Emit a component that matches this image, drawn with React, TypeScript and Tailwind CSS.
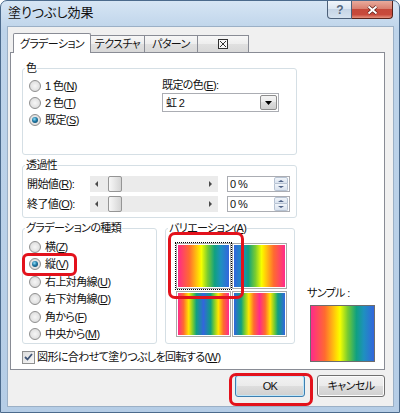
import React from "react";

const FONT =
  "font-['Liberation_Sans','Noto_Sans_CJK_JP',sans-serif] [font-feature-settings:'palt']";

const RAINBOW =
  "bg-[linear-gradient(90deg,#ff2a8a_0%,#ff6a30_22%,#ffe600_42%,#f5ff00_46%,#7acc30_58%,#10a080_72%,#1e90c0_84%,#3366dd_100%)]";
const RAINBOW_REV =
  "bg-[linear-gradient(270deg,#ff2a8a_0%,#ff6a30_22%,#ffe600_42%,#f5ff00_46%,#7acc30_58%,#10a080_72%,#1e90c0_84%,#3366dd_100%)]";
const RAINBOW_MID =
  "bg-[linear-gradient(90deg,#ff2a8a_0%,#ff6a30_11%,#ffe600_21%,#7acc30_29%,#10a080_36%,#3366dd_50%,#10a080_64%,#7acc30_71%,#ffe600_79%,#ff6a30_89%,#ff2a8a_100%)]";
const RAINBOW_MID_REV =
  "bg-[linear-gradient(90deg,#3366dd_0%,#10a080_14%,#7acc30_21%,#ffe600_29%,#ff6a30_39%,#ff2a8a_50%,#ff6a30_61%,#ffe600_71%,#7acc30_79%,#10a080_86%,#3366dd_100%)]";

function Acc({ t }: { t: string }) {
  return <span className="underline underline-offset-[1px]">{t}</span>;
}

function Radio({ checked = false }: { checked?: boolean }) {
  return (
    <span className="flex h-[12px] w-[12px] shrink-0 items-center justify-center rounded-full border border-[#8f8f8f] bg-[radial-gradient(circle_at_50%_50%,#f6f6f6_0%,#e4e4e4_55%,#cdcdcd_100%)]">
      {checked && (
        <span className="h-[6px] w-[6px] rounded-full bg-[radial-gradient(circle_at_40%_35%,#8fe0fa_0%,#1f78a4_45%,#0b3a57_100%)]" />
      )}
    </span>
  );
}

function RadioRow({
  checked,
  h,
  children,
}: {
  checked?: boolean;
  h: string;
  children: React.ReactNode;
}) {
  return (
    <div className={"flex items-center gap-[4px] " + h}>
      <Radio checked={checked} />
      <span className="leading-[14px]">{children}</span>
    </div>
  );
}

function Group({
  label,
  className,
  children,
}: {
  label: React.ReactNode;
  className: string;
  children?: React.ReactNode;
}) {
  return (
    <div className={"rounded-[3px] border border-[#d5dfe5] " + className}>
      <div className="-mt-[8px] ml-[2px] w-fit bg-white px-[1px] leading-[14px]">{label}</div>
      {children}
    </div>
  );
}

function Slider() {
  return (
    <div className="flex h-[16px] w-[128px] items-center bg-[#ebebeb]">
      <span className="ml-[5px] h-0 w-0 border-y-[3px] border-r-[3px] border-y-transparent border-r-[#4a4a4a]" />
      <span className="ml-[10px] h-[16px] w-[14px] rounded-[2px] border border-[#959595] bg-[linear-gradient(90deg,#f7f7f7,#e6e6e6_50%,#d4d4d4)]" />
      <span className="ml-auto mr-[6px] h-0 w-0 border-y-[3px] border-l-[3px] border-y-transparent border-l-[#4a4a4a]" />
    </div>
  );
}

function Spin() {
  return (
    <div className="ml-[9px] flex h-[16px] w-[63px] items-center border border-[#abadb3] bg-white pl-[2px]">
      <span className="flex-1 leading-[14px]">0 %</span>
      <div className="mr-[1px] flex h-[14px] w-[14px] flex-col">
        <span className="flex h-[7px] items-center justify-center rounded-t-[2px] border border-[#b7c3d3] bg-[linear-gradient(180deg,#f1f5fa,#d9e2ee)]">
          <span className="h-0 w-0 border-x-[3px] border-b-[2px] border-x-transparent border-b-[#4d6185]" />
        </span>
        <span className="flex h-[7px] items-center justify-center rounded-b-[2px] border border-t-0 border-[#b7c3d3] bg-[linear-gradient(180deg,#f1f5fa,#d9e2ee)]">
          <span className="h-0 w-0 border-x-[3px] border-t-[2px] border-x-transparent border-t-[#4d6185]" />
        </span>
      </div>
    </div>
  );
}

function Tile({ bg, focus }: { bg: string; focus?: boolean }) {
  return (
    <div
      className={
        "border border-[#a9a9a9] bg-white p-[1px] " +
        (focus ? "outline outline-1 outline-offset-0 outline-dotted outline-black" : "")
      }
    >
      <div className={"h-full w-full " + bg} />
    </div>
  );
}

function Button({ children, def }: { children: React.ReactNode; def?: boolean }) {
  return (
    <div
      className={
        "flex h-[22px] items-center justify-center rounded-[3px] border bg-[linear-gradient(180deg,#f2f2f2_0%,#ebebeb_48%,#dddddd_52%,#cfcfcf_100%)] leading-[14px] " +
        (def
          ? "w-[70px] border-[#3c7fb1] shadow-[inset_0_0_0_1px_#bfe6f9]"
          : "w-[68px] border-[#707070] shadow-[inset_0_0_0_1px_#fcfcfc]")
      }
    >
      {children}
    </div>
  );
}

export default function App() {
  return (
    <div
      className={
        "relative h-[413px] w-[400px] overflow-hidden rounded-t-[7px] border border-[#4b6a8c] bg-[linear-gradient(180deg,#d6e5f4_0%,#bed4ea_7%,#b5cde6_100%)] text-[11px] tracking-[-0.6px] text-[#111] " +
        FONT
      }
    >
      {/* title bar */}
      <div className="flex h-[26px] items-start justify-between pl-[7px] pr-[6px]">
        <span className="mt-[4px] text-[13px] leading-[16px] tracking-normal">塗りつぶし効果</span>
        <div className="flex">
          <div className="flex h-[18px] w-[25px] items-center justify-center rounded-bl-[4px] border border-t-0 border-[#4c6079] bg-[linear-gradient(180deg,#f1f5fa_0%,#dde7f2_45%,#c6d5e6_50%,#d5e2ef_100%)] text-[12px] font-bold leading-none text-[#55677e]">
            ?
          </div>
          <div className="flex h-[18px] w-[41px] items-center justify-center rounded-br-[4px] border border-l-0 border-t-0 border-[#5a2219] bg-[linear-gradient(180deg,#e9ab9c_0%,#d98070_45%,#c5493a_50%,#c84a3b_80%,#e5937f_100%)]">
            <svg width="11" height="10" viewBox="0 0 11 10">
              <path d="M1.5 1.5 9.5 8.5M9.5 1.5 1.5 8.5" stroke="#5a1d15" strokeWidth="3.4" />
              <path d="M1.5 1.5 9.5 8.5M9.5 1.5 1.5 8.5" stroke="#ffffff" strokeWidth="2" />
            </svg>
          </div>
        </div>
      </div>

      {/* client area */}
      <div className="ml-[7px] h-[379px] w-[385px] bg-[#f0f0f0] shadow-[0_0_0_1px_#9bb0c6]">
        {/* tabs */}
        <div className="flex h-[25px] items-end pl-[5px]">
          <div className="relative z-10 -mb-px flex h-[20px] w-[78px] items-center justify-center rounded-t-[2px] border border-b-0 border-[#898c95] bg-white leading-[14px]">
            グラデーション
          </div>
          <div className="flex h-[17px] w-[54px] items-center justify-center border-r border-t border-[#898c95] bg-[linear-gradient(180deg,#f7f7f7_0%,#ededed_50%,#e0e0e0_51%,#d8d8d8_100%)] leading-[14px]">
            テクスチャ
          </div>
          <div className="flex h-[17px] w-[53px] items-center justify-center border-r border-t border-[#898c95] bg-[linear-gradient(180deg,#f7f7f7_0%,#ededed_50%,#e0e0e0_51%,#d8d8d8_100%)] leading-[14px]">
            パターン
          </div>
          <div className="flex h-[17px] w-[51px] items-center justify-center border-r border-t border-[#898c95] bg-[linear-gradient(180deg,#f7f7f7_0%,#ededed_50%,#e0e0e0_51%,#d8d8d8_100%)]">
            <svg width="10" height="10" viewBox="0 0 10 10">
              <rect x="0.5" y="0.5" width="9" height="9" fill="#f4f4f4" stroke="#303030" />
              <path d="M2 2 8 8M8 2 2 8" stroke="#303030" strokeWidth="1" />
              <rect x="4" y="4" width="2" height="2" fill="#303030" />
            </svg>
          </div>
        </div>

        {/* panel */}
        <div className="ml-[2px] flex h-[318px] w-[375px] border border-[#898c95] bg-white pl-[11px] pt-[15px]">
          <div className="flex w-[275px] flex-col">
            <Group label="色" className="h-[87px]">
              <div className="mt-[2px] flex">
                <div className="flex w-[139px] flex-col pl-[6px]">
                  <RadioRow h="h-[17px]">
                    1 色(<Acc t="N" />)
                  </RadioRow>
                  <RadioRow h="h-[17px]">
                    2 色(<Acc t="T" />)
                  </RadioRow>
                  <RadioRow h="h-[17px]" checked>
                    既定(<Acc t="S" />)
                  </RadioRow>
                </div>
                <div className="flex flex-col">
                  <div className="flex h-[16px] items-center leading-[14px]">
                    既定の色(<Acc t="E" />):
                  </div>
                  <div className="flex h-[19px] w-[117px] items-center border border-[#abadb3] bg-white pl-[3px]">
                    <span className="flex-1 leading-[14px]">虹 2</span>
                    <span className="mr-[1px] flex h-[15px] w-[17px] items-center justify-center rounded-[2px] border border-[#8d8d8d] bg-[linear-gradient(180deg,#f4f4f4_0%,#ebebeb_45%,#dddddd_50%,#cfcfcf_100%)]">
                      <svg width="7" height="4" viewBox="0 0 7 4">
                        <path d="M0 0h7L3.5 4z" fill="#000" />
                      </svg>
                    </span>
                  </div>
                </div>
              </div>
            </Group>

            <Group label="透過性" className="mt-[10px] h-[53px]">
              <div className="mt-[4px] flex h-[16px] items-center pl-[4px]">
                <span className="w-[63px] leading-[14px]">
                  開始値(<Acc t="R" />):
                </span>
                <Slider />
                <Spin />
              </div>
              <div className="mt-[4px] flex h-[16px] items-center pl-[4px]">
                <span className="w-[63px] leading-[14px]">
                  終了値(<Acc t="O" />):
                </span>
                <Slider />
                <Spin />
              </div>
            </Group>

            <div className="mt-[10px] flex gap-[8px]">
              <Group label="グラデーションの種類" className="h-[116px] w-[135px]">
                <div className="mt-[3px] flex flex-col pl-[6px]">
                  <RadioRow h="h-[17.5px]">
                    横(<Acc t="Z" />)
                  </RadioRow>
                  <RadioRow h="h-[17.5px]" checked>
                    縦(<Acc t="V" />)
                  </RadioRow>
                  <RadioRow h="h-[17.5px]">
                    右上対角線(<Acc t="U" />)
                  </RadioRow>
                  <RadioRow h="h-[17.5px]">
                    右下対角線(<Acc t="D" />)
                  </RadioRow>
                  <RadioRow h="h-[17.5px]">
                    角から(<Acc t="F" />)
                  </RadioRow>
                  <RadioRow h="h-[17.5px]">
                    中央から(<Acc t="M" />)
                  </RadioRow>
                </div>
              </Group>
              <Group
                label={
                  <>
                    バリエーション(<Acc t="A" />)
                  </>
                }
                className="h-[116px] w-[130px]"
              >
                <div className="ml-[10px] mt-[8px] grid grid-cols-[55px_55px] grid-rows-[46px_46px] gap-x-[1px] gap-y-[2px]">
                  <Tile bg={RAINBOW} focus />
                  <Tile bg={RAINBOW_REV} />
                  <Tile bg={RAINBOW_MID} />
                  <Tile bg={RAINBOW_MID_REV} />
                </div>
              </Group>
            </div>

            <div className="mt-[5px] flex h-[16px] items-center gap-[2px]">
              <span className="flex h-[13px] w-[13px] items-center justify-center border border-[#8e8f8f] bg-[linear-gradient(135deg,#dcdcdc,#f8f8f8)]">
                <svg width="9" height="8" viewBox="0 0 9 8">
                  <path d="M1 4 3.5 6.5 8 1" fill="none" stroke="#3f5476" strokeWidth="1.8" />
                </svg>
              </span>
              <span className="leading-[14px]">
                図形に合わせて塗りつぶしを回転する(<Acc t="W" />)
              </span>
            </div>
          </div>

          <div className="ml-[10px] flex flex-col pt-[218px]">
            <span className="leading-[14px]">サンプル :</span>
            <div className={"ml-[3px] mt-[5px] h-[57px] w-[65px] border border-[#6d6d6d] " + RAINBOW} />
          </div>
        </div>

        {/* buttons */}
        <div className="mt-[5px] flex gap-[12px] pl-[227px]">
          <Button def>OK</Button>
          <Button>キャンセル</Button>
        </div>
      </div>

      {/* red annotation rings */}
      <div className="absolute left-[21px] top-[252px] h-[23px] w-[55px] rounded-[6px] border-[3px] border-[#e3121c]" />
      <div className="absolute left-[167px] top-[231px] h-[67px] w-[76px] rounded-[7px] border-[3px] border-[#e3121c]" />
      <div className="absolute left-[228px] top-[372px] h-[33px] w-[84px] rounded-[7px] border-[3px] border-[#e3121c]" />
    </div>
  );
}
